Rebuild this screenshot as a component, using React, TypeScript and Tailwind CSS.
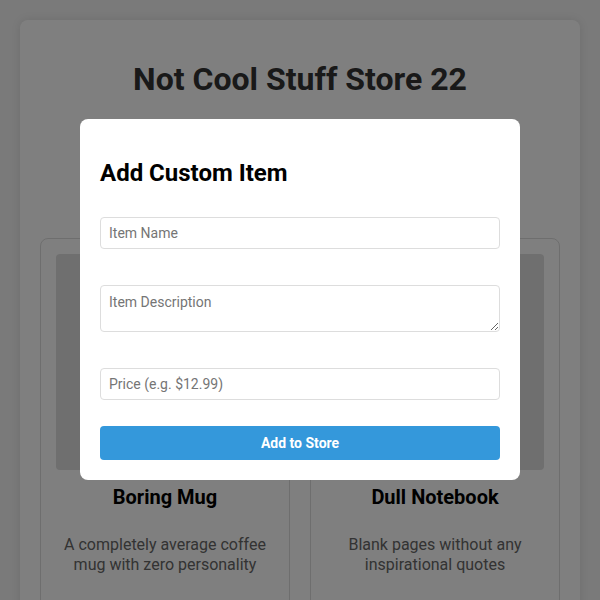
import { useState } from 'react'

const products = [
  { id: 1, name: 'Boring Mug', description: 'A completely average coffee mug with zero personality' },
  { id: 2, name: 'Dull Notebook', description: 'Blank pages without any inspirational quotes' },
]

export default function App() {
  const [name, setName] = useState('')
  const [description, setDescription] = useState('')
  const [price, setPrice] = useState('')

  return (
    <div className="min-h-screen bg-[#f4f4f4] p-5 font-['Roboto','Liberation_Sans',sans-serif] text-[#333]">
      <div className="rounded-lg bg-white p-5 shadow-[0_0_10px_rgba(0,0,0,0.1)]">
        <h1 className="my-[21px] text-center text-[32px] font-bold leading-[37px] text-[#333]">Not Cool Stuff Store 22</h1>
        <div className="h-[119px]" />
        <div className="grid grid-cols-2 gap-5">
          {products.map((p) => (
            <div key={p.id} className="rounded-lg border border-[#ddd] bg-white p-[15px] pb-[60px] text-center">
              <div className="h-[216px] rounded bg-[#dedede]" />
              <h3 className="mt-[15px] text-[20px] font-bold leading-[24px] text-black">{p.name}</h3>
              <p className="mt-[26px] px-2 text-[16px] leading-[20px] text-[#666]">{p.description}</p>
            </div>
          ))}
        </div>
      </div>

      <div className="fixed inset-0 flex items-start justify-center bg-black/50 pt-[119px]">
        <div className="w-[440px] rounded-lg bg-white p-5">
          <h2 className="mt-5 mb-[30px] text-[24px] font-bold leading-[28px] text-black">Add Custom Item</h2>
          <input
            value={name}
            onChange={(e) => setName(e.target.value)}
            placeholder="Item Name"
            className="block h-8 w-full rounded border border-[#ddd] px-2 text-[14px] placeholder:text-[#757575] outline-none"
          />
          <textarea
            value={description}
            onChange={(e) => setDescription(e.target.value)}
            placeholder="Item Description"
            className="mt-9 block h-[47px] w-full rounded border border-[#ddd] px-2 py-2 text-[14px] leading-[16px] placeholder:text-[#757575] outline-none"
          />
          <input
            value={price}
            onChange={(e) => setPrice(e.target.value)}
            placeholder="Price (e.g. $12.99)"
            className="mt-9 block h-8 w-full rounded border border-[#ddd] px-2 text-[14px] placeholder:text-[#757575] outline-none"
          />
          <button className="mt-[26px] block h-[34px] w-full rounded bg-[#3498db] text-[14px] font-bold text-white">
            Add to Store
          </button>
        </div>
      </div>
    </div>
  )
}
